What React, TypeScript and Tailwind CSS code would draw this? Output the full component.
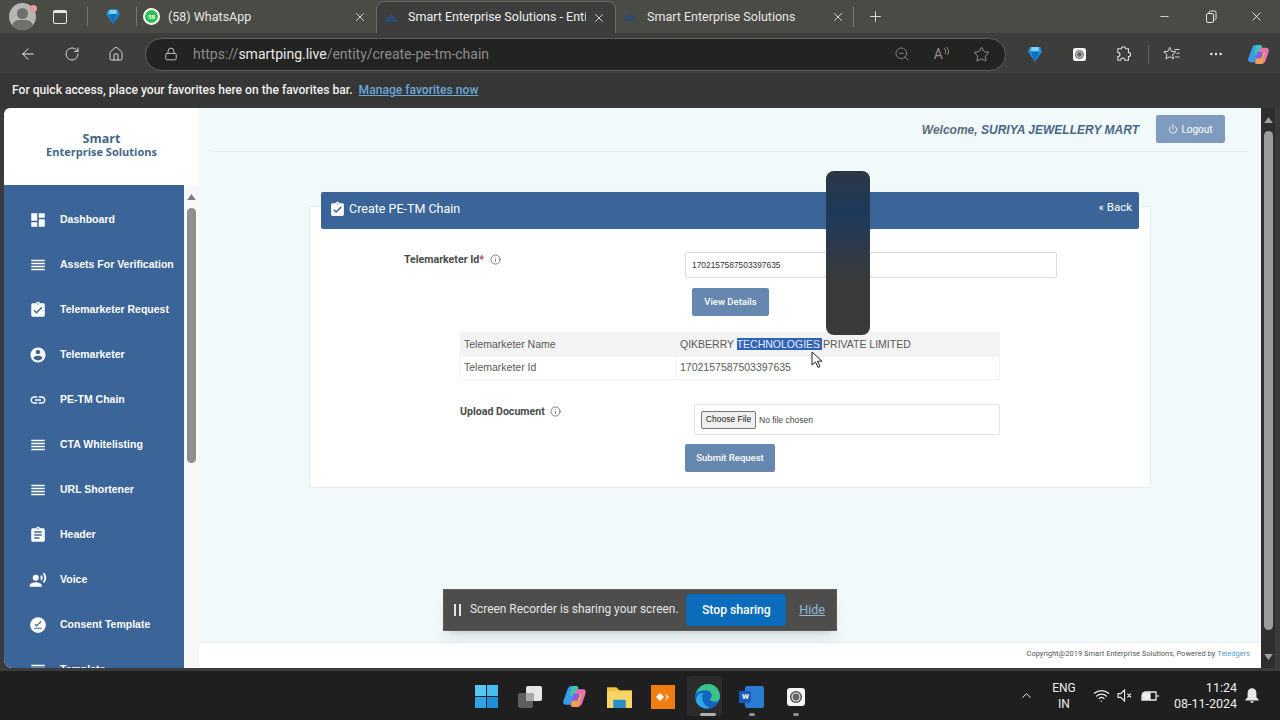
import React from 'react';
import {
  ArrowLeft, RotateCw, Home, Lock, ZoomOut, Star, X, Plus, Minus, ChevronUp, Wifi, Info, Power, MoreHorizontal,
} from 'lucide-react';

const P = {
  dashboard: 'M3 13h8V3H3v10zm0 8h8v-6H3v6zm10 0h8V11h-8v10zm0-18v6h8V3h-8z',
  lines: 'M3 15h18v-2H3v2zm0 4h18v-2H3v2zm0-8h18V9H3v2zm0-6v2h18V5H3z',
  turnedIn: 'M19 3h-4.18C14.4 1.84 13.3 1 12 1c-1.3 0-2.4.84-2.82 2H5c-1.1 0-2 .9-2 2v14c0 1.1.9 2 2 2h14c1.1 0 2-.9 2-2V5c0-1.1-.9-2-2-2zm-7 0c.55 0 1 .45 1 1s-.45 1-1 1-1-.45-1-1 .45-1 1-1zm-2 14l-4-4 1.41-1.41L10 14.17l6.59-6.59L18 9l-8 8z',
  account: 'M12 2C6.48 2 2 6.48 2 12s4.48 10 10 10 10-4.48 10-10S17.52 2 12 2zm0 3c1.66 0 3 1.34 3 3s-1.34 3-3 3-3-1.34-3-3 1.34-3 3-3zm0 14.2c-2.5 0-4.71-1.28-6-3.22.03-1.99 4-3.08 6-3.08 1.99 0 5.97 1.09 6 3.08-1.29 1.94-3.5 3.22-6 3.22z',
  link: 'M3.9 12c0-1.71 1.39-3.1 3.1-3.1h4V7H7c-2.76 0-5 2.24-5 5s2.24 5 5 5h4v-1.9H7c-1.71 0-3.1-1.39-3.1-3.1zM8 13h8v-2H8v2zm9-6h-4v1.9h4c1.71 0 3.1 1.39 3.1 3.1s-1.39 3.1-3.1 3.1h-4V17h4c2.76 0 5-2.24 5-5s-2.24-5-5-5z',
  assignment: 'M19 3h-4.18C14.4 1.84 13.3 1 12 1c-1.3 0-2.4.84-2.82 2H5c-1.1 0-2 .9-2 2v14c0 1.1.9 2 2 2h14c1.1 0 2-.9 2-2V5c0-1.1-.9-2-2-2zm-7 0c.55 0 1 .45 1 1s-.45 1-1 1-1-.45-1-1 .45-1 1-1zm2 14H7v-2h7v2zm3-4H7v-2h10v2zm0-4H7V7h10v2z',
  voice: 'M9 5a4 4 0 1 0 0 8 4 4 0 0 0 0-8zm0 10c-2.67 0-8 1.34-8 4v2h16v-2c0-2.66-5.33-4-8-4zm7.76-9.64l-1.68 1.69c.84 1.18.84 2.71 0 3.89l1.68 1.69c2.02-2.02 2.02-5.07 0-7.27zM20.07 2l-1.63 1.63c2.77 3.02 2.77 7.56 0 10.74L20.07 16c3.9-3.89 3.91-9.95 0-14z',
  consent: 'M12 1.5a10.5 10.5 0 1 0 0 21 10.5 10.5 0 0 0 0-21zM7 15.5h10v1.6H7v-1.6zm3.2-1.2L7.3 11.4l1.2-1.2 1.7 1.7 5.3-5.3 1.2 1.2-6.5 6.5z',
};

const menu = [
  { label: 'Dashboard', icon: P.dashboard },
  { label: 'Assets For Verification', icon: P.lines },
  { label: 'Telemarketer Request', icon: P.turnedIn },
  { label: 'Telemarketer', icon: P.account },
  { label: 'PE-TM Chain', icon: P.link },
  { label: 'CTA Whitelisting', icon: P.lines },
  { label: 'URL Shortener', icon: P.lines },
  { label: 'Header', icon: P.assignment },
  { label: 'Voice', icon: P.voice },
  { label: 'Consent Template', icon: P.consent },
  { label: 'Template', icon: P.lines },
];

const MatIcon = ({ d, className }: { d: string; className: string }) => (
  <svg viewBox="0 0 24 24" fill="currentColor" fillRule="evenodd" className={className}>
    <path d={d} />
  </svg>
);

const Diamond = ({ className }: { className: string }) => (
  <svg viewBox="0 0 16 18" className={className}>
    <path d="M2 1h12l2 5-8 12L0 6z" fill="#1c8fe0" />
    <path d="M4 1h8l1 5H3z" fill="#7fd4fa" />
    <path d="M3 6h10l-5 12z" fill="#0f6fc0" />
  </svg>
);

const Copilot = ({ className }: { className: string }) => (
  <svg viewBox="0 0 24 24" className={className}>
    <path d="M9 2h4c2 0 2.6 1.4 2 3l-4 12c-.6 2-1.6 3-4 3H4c-2.5 0-3.4-2-2.6-4L5 6c.8-2.500 2-4 4-4z" fill="#3a9be8" />
    <path d="M11 2h3c1.500 0 2 2 1.500 3.500L13 12l-6-.500L9 5c.4-1.500 1-3 2-3z" fill="#35c9b0" />
    <path d="M15 5h5c2.500 0 3.400 2 2.600 4l-3 9c-.8 2-2 4-4.600 4h-5c-1.600 0-2-1.400-1.500-3l4-11c.5-1.600 1-3 2.500-3z" fill="#e870b8" />
    <path d="M10 17l3-8h6l-3 13h-5c-1.600 0-2-1.400-1-5z" fill="#f3a24a" />
    <path d="M11 9h6l-2 7H9z" fill="#8a5ce0" />
  </svg>
);

const Recorder = ({ className }: { className: string }) => (
  <svg viewBox="0 0 18 18" className={className}>
    <rect width="18" height="18" rx="3" fill="#f4f4f4" />
    <circle cx="9" cy="9" r="6" fill="#555" />
    <circle cx="9" cy="9" r="4.500" fill="#e8e8e8" />
    <circle cx="9" cy="9" r="3.400" fill="#666" />
  </svg>
);

const EdgeLogo = ({ className }: { className: string }) => (
  <svg viewBox="0 0 24 24" className={className}>
    <circle cx="12" cy="12" r="12" fill="#1565c0" />
    <path d="M1 9C3 3 8 0 12.500 0 19 0 24 5 24 12c0 3-2 5-5 5-2.500 0-4.500-1-4.500-2.500 0-1 1.500-1.500 1.500-3.500 0-3-2.500-5-6-5S3 7 1 9z" fill="#3bc48a" />
    <path d="M7 14c0 4 3 7.500 7 8.500-4 2-11 0-13-6 0-5 3-8 7-8-1 1.500-1 3.500-1 5.500z" fill="#2fa8e8" />
  </svg>
);

const TabIcon = () => (
  <svg viewBox="0 0 16 10" className="w-[16px] h-[10px] shrink-0">
    <path d="M0 9l8-8 8 8z" fill="#2e4a6e" />
  </svg>
);

const ToolSlot = ({ children }: { children: React.ReactNode }) => (
  <div className="w-[44px] flex justify-center items-center shrink-0">{children}</div>
);

const TaskSlot = ({ children, mark }: { children: React.ReactNode; mark?: 'big' | 'small' }) => (
  <div className="relative w-[44.300px] h-full flex justify-center items-center shrink-0 pt-[2px]">
    {mark === 'big' && <div className="absolute left-[2px] top-[5px] w-[35px] h-[40px] rounded-[4px] bg-[#2c2c2c]" />}
    <div className="relative">{children}</div>
    {mark && (
      <div className={`absolute bottom-[4px] left-1/2 -translate-x-1/2 h-[3px] rounded-full ${mark === 'big' ? 'w-[16px] bg-[#b0b0b0]' : 'w-[6px] bg-[#8e8e8e]'}`} />
    )}
  </div>
);

const Tri = ({ down, className }: { down?: boolean; className: string }) => (
  <svg viewBox="0 0 10 7" fill="currentColor" className={className}>
    <path d={down ? 'M0 0h10L5 7z' : 'M5 0l5 7H0z'} />
  </svg>
);

export default function App() {
  return (
    <div className="relative w-[1280px] h-[720px] overflow-hidden flex flex-col bg-[#3a3a3a] font-['Roboto',sans-serif]">
      {/* tab strip */}
      <div className="h-[33px] flex items-stretch bg-[#4b4b46] shrink-0 text-[#e6e6e6]">
        <div className="relative ml-[9px] mt-[3px] w-[27px] h-[27px] rounded-full bg-[#b5b5b2] overflow-hidden shrink-0">
          <div className="absolute left-[8px] top-[5px] w-[11px] h-[11px] rounded-full bg-[#6f6f6c]" />
          <div className="absolute left-[3px] top-[17px] w-[21px] h-[14px] rounded-full bg-[#6f6f6c]" />
        </div>
        <div className="ml-[-6px] mt-[5px] w-[7px] h-[7px] rounded-full bg-[#e39a9a] shrink-0 z-10" />
        <div className="ml-[16px] mt-[10px] w-[14px] h-[14px] rounded-[2px] border border-[#e6e6e6] border-t-[3px] shrink-0" />
        <div className="ml-[20px] mt-[7px] w-[1px] h-[19px] bg-[#77776f] shrink-0" />
        <Diamond className="ml-[18px] mt-[9px] w-[14px] h-[15px] shrink-0" />
        <div className="ml-[16px] mt-[7px] w-[1px] h-[19px] bg-[#77776f] shrink-0" />
        <div className="ml-[6px] mt-[8px] w-[17px] h-[17px] rounded-full bg-[#2fc04f] border-2 border-white flex items-center justify-center text-[6px] font-bold text-white shrink-0">
          58
        </div>
        <span className="ml-[8px] mt-[8px] w-[183px] text-[12.500px] shrink-0">(58) WhatsApp</span>
        <X className="ml-[2px] mt-[10px] w-[14px] h-[14px] shrink-0" strokeWidth={1.5} />

        <div className="ml-[9px] mt-[1px] w-[240px] flex items-center bg-[#3d3d3b] rounded-t-[8px] border border-b-0 border-[#6a6a66] pl-[6px] shrink-0">
          <TabIcon />
          <span className="ml-[9px] w-[178px] overflow-hidden whitespace-nowrap text-[12.500px] text-[#f0f0f0]">
            Smart Enterprise Solutions - Entity
          </span>
          <X className="ml-[6px] w-[14px] h-[14px] shrink-0" strokeWidth={1.5} />
        </div>
        <div className="w-[229px] flex items-center pl-[6px] pt-[1px] shrink-0">
          <TabIcon />
          <span className="ml-[9px] w-[184px] whitespace-nowrap text-[12.500px]">Smart Enterprise Solutions</span>
          <X className="w-[14px] h-[14px] shrink-0" strokeWidth={1.5} />
        </div>

        <div className="ml-[8px] mt-[7px] w-[1px] h-[20px] bg-[#77776f] shrink-0" />
        <Plus className="ml-[13px] mt-[8px] w-[17px] h-[17px] shrink-0" strokeWidth={1.3} />
        <Minus className="ml-[274px] mt-[10px] w-[13px] h-[13px] shrink-0" strokeWidth={1.5} />
        <svg viewBox="0 0 12 13" fill="none" stroke="#e6e6e6" className="ml-[34px] mt-[10px] w-[12px] h-[13px] shrink-0">
          <rect x="1.500" y="3.500" width="7" height="9" rx="1.500" />
          <path d="M4 3V2.500A1.500 1.500 0 0 1 5.500 1h4A1.500 1.500 0 0 1 11 2.500v6A1.500 1.500 0 0 1 9.500 10" />
        </svg>
        <X className="ml-[32px] mt-[9px] w-[15px] h-[15px] shrink-0" strokeWidth={1.5} />
      </div>

      {/* toolbar */}
      <div className="h-[40px] flex items-center pl-[6px] pt-[2px] bg-[#3d3d3b] shrink-0 text-[#ececec]">
        <ToolSlot><ArrowLeft className="w-[18px] h-[18px]" strokeWidth={1.3} /></ToolSlot>
        <ToolSlot><RotateCw className="w-[16px] h-[16px]" strokeWidth={1.3} /></ToolSlot>
        <ToolSlot><Home className="w-[16px] h-[16px]" strokeWidth={1.3} /></ToolSlot>
        <div className="ml-[7px] w-[861px] h-[33px] flex items-center rounded-full bg-[#232322] border border-[#5f5f5c] pl-[18px] shrink-0">
          <Lock className="w-[14px] h-[14px] text-[#d8d8d8]" strokeWidth={1.4} />
          <span className="ml-[15px] text-[14px] text-[#8c8c8a] whitespace-nowrap">
            https://<span className="text-[#e8e8e8]">smartping.live</span>/entity/create-pe-tm-chain
          </span>
          <div className="ml-auto flex items-center text-[#8f8f8d]">
            <ZoomOut className="w-[16px] h-[16px] mr-[24px]" strokeWidth={1.3} />
            <span className="text-[14px] leading-none">A</span>
            <svg viewBox="0 0 6 10" fill="none" stroke="#8f8f8d" className="w-[6px] h-[10px] mb-[5px] mr-[24px]">
              <path d="M1 1c2 2 2 4 1 6M3.500 0c2.500 3 2.500 5 1 8" />
            </svg>
            <Star className="w-[17px] h-[17px] mr-[15px] text-[#a5a5a2]" strokeWidth={1.2} />
          </div>
        </div>
        <div className="ml-[7px] flex items-center">
          <ToolSlot><Diamond className="w-[14px] h-[16px]" /></ToolSlot>
          <ToolSlot><Recorder className="w-[13px] h-[13px]" /></ToolSlot>
          <ToolSlot>
            <svg viewBox="0 0 24 24" fill="none" stroke="#dcdcdc" strokeWidth="1.500" className="w-[17px] h-[17px]">
              <path d="M9 4a3 3 0 0 1 6 0h4v5a3 3 0 0 1 0 6v5h-5a3 3 0 0 0-6 0H4v-5a3 3 0 0 0 0-6V4z" />
            </svg>
          </ToolSlot>
          <div className="ml-[3px] w-[1px] h-[19px] bg-[#5f5f5c]" />
          <div className="w-[1px]" />
          <ToolSlot>
            <svg viewBox="0 0 24 24" fill="none" stroke="#dcdcdc" strokeWidth="1.300" className="w-[18px] h-[18px]">
              <path d="M9 3l2.400 5.500 5.600.5-4.200 3.800 1.300 5.700L9 15.600 3.900 18.500l1.300-5.700L1 9l5.600-.5zM15 6h7M18 11h4M16 16h6" />
            </svg>
          </ToolSlot>
          <ToolSlot><MoreHorizontal className="w-[16px] h-[16px]" strokeWidth={1.6} /></ToolSlot>
          <Copilot className="ml-[9px] w-[23px] h-[23px]" />
        </div>
      </div>

      {/* favorites bar */}
      <div className="h-[35px] flex items-center pl-[12px] bg-[#363636] shrink-0 text-[12.100px] font-medium">
        <span className="text-[#f0f0f0]">For quick access, place your favorites here on the favorites bar.</span>
        <span className="ml-[6px] text-[#6aa7d8] underline">Manage favorites now</span>
      </div>

      {/* page */}
      <div className="flex-1 min-h-0 flex pl-[4px] pr-[5px] font-['Liberation_Sans',sans-serif]">
        {/* sidebar */}
        <div className="w-[195px] flex flex-col bg-white rounded-tl-[6px] rounded-bl-[8px] overflow-hidden shrink-0">
          <div className="h-[77px] flex flex-col items-center justify-center pb-[3px] font-['Open_Sans',sans-serif] font-bold text-[11px] leading-[13px] text-[#45668a]">
            <span className="text-[12.500px]">Smart</span>
            <span>Enterprise Solutions</span>
          </div>
          <div className="flex-1 min-h-0 flex">
            <div className="w-[180px] bg-[#3b6498] overflow-hidden pt-[12px] shrink-0">
              {menu.map(item => (
                <div key={item.label} className="h-[45px] flex items-center pl-[25px] text-white">
                  <MatIcon d={item.icon} className="w-[18px] h-[18px] shrink-0" />
                  <span className="ml-[13px] text-[10.500px] font-bold whitespace-nowrap">{item.label}</span>
                </div>
              ))}
            </div>
            <div className="flex-1 flex flex-col items-center bg-[#f8f8f8] pt-[9px]">
              <Tri className="w-[9px] h-[6px] text-[#7d7d7d]" />
              <div className="mt-[8px] w-[9px] h-[255px] rounded-full bg-[#8f8f8f]" />
            </div>
          </div>
        </div>

        {/* main */}
        <div className="w-[1062px] flex flex-col bg-[#f2f9fa] shrink-0">
          <div className="flex justify-end items-start pt-[7px] pr-[36px] h-[43px] shrink-0">
            <span className="mt-[6px] mr-[17px] text-[12px] font-bold italic text-[#5b6b7c]">
              Welcome, <span className="text-[#4a6688]">SURIYA JEWELLERY MART</span>
            </span>
            <button className="w-[69px] h-[28px] flex items-center justify-center rounded-[2px] bg-[#7f9cc0] text-white text-[10px] font-['Roboto',sans-serif]">
              <Power className="w-[10px] h-[10px] mr-[3px]" strokeWidth={2} />
              Logout
            </button>
          </div>
          <div className="mx-[13px] h-[1px] bg-[#e6eef0] shrink-0" />

          <div className="flex-1 min-h-0 pt-[54px]">
            <div className="ml-[110px] w-[842px] bg-white border border-[#e3edf3] rounded-[2px] pb-[15px]">
              <div className="-mt-[15px] mx-[11px] h-[37px] flex items-center justify-between pl-[8px] pr-[7px] rounded-[2px] bg-[#3b6498] text-white font-['Roboto',sans-serif]">
                <div className="flex items-center -mt-[2px]">
                  <MatIcon d={P.turnedIn} className="w-[17px] h-[17px]" />
                  <span className="ml-[3px] text-[12.500px]">Create PE-TM Chain</span>
                </div>
                <span className="text-[11.500px] -mt-[6px]">« Back</span>
              </div>

              <div className="mt-[23px] flex items-start">
                <div className="ml-[94px] w-[281px] flex items-center text-[10.600px] font-bold text-[#4a4a4a] font-['Roboto',sans-serif]">
                  Telemarketer Id<span className="text-[#b23a4a]">*</span>
                  <Info className="ml-[6px] w-[11px] h-[11px]" strokeWidth={1.5} />
                </div>
                <input
                  readOnly
                  value="1702157587503397635"
                  className="w-[372px] h-[26px] border border-[#dcdcdc] rounded-[2px] bg-white pl-[6px] text-[8.400px] text-[#333] outline-none"
                />
              </div>

              <button className="block ml-[382px] mt-[10px] w-[77px] h-[28px] rounded-[2px] bg-[#6587b0] text-white text-[9.500px] font-medium font-['Roboto',sans-serif]">
                View Details
              </button>

              <div className="ml-[150px] mt-[16px] w-[540px] border border-[#f3f3f3] text-[10.500px] text-[#5a5a5a]">
                <div className="h-[24px] flex items-center bg-[#f3f3f3]">
                  <div className="w-[216px] pl-[3px]">Telemarketer Name</div>
                  <div className="pl-[3px] whitespace-nowrap">
                    QIKBERRY{' '}
                    <span className="bg-[#2f62b8] text-[#e8eefa] pr-[2px]">TECHNOLOGIES</span>
                    <span className="ml-[1px]">PRIVATE LIMITED</span>
                  </div>
                </div>
                <div className="h-[22px] flex items-center">
                  <div className="w-[216px] pl-[3px] h-full flex items-center border-r border-[#f3f3f3]">Telemarketer Id</div>
                  <div className="pl-[3px]">1702157587503397635</div>
                </div>
              </div>

              <div className="mt-[24px] flex items-start">
                <div className="ml-[150px] w-[234px] flex items-center text-[10.600px] font-bold text-[#4a4a4a] font-['Roboto',sans-serif]">
                  Upload Document
                  <Info className="ml-[5px] w-[11px] h-[11px]" strokeWidth={1.5} />
                </div>
                <div className="w-[306px] h-[31px] flex items-center border border-[#e4e4e4] rounded-[2px] pl-[6px]">
                  <input
                    type="file"
                    className="w-[200px] text-[8.500px] text-[#444] file:h-[18px] file:w-[55px] file:mr-[3px] file:bg-[#efefef] file:border file:border-[#767676] file:rounded-[2px] file:text-[#222]"
                  />
                </div>
              </div>

              <button className="block ml-[375px] mt-[9px] w-[90px] h-[28px] rounded-[2px] bg-[#6587b0] text-white text-[9.500px] font-medium font-['Roboto',sans-serif]">
                Submit Request
              </button>
            </div>
          </div>

          <div className="h-[26px] flex items-center justify-end pr-[11px] pb-[3px] bg-white border-t border-[#e8f0f2] shrink-0 font-['Roboto',sans-serif] text-[7.500px] text-[#555]">
            Copyright@2019 Smart Enterprise Solutions, Powered by <span className="ml-[2px] text-[#4f9ccf]">Teledgers</span>
          </div>
        </div>

        {/* page scrollbar */}
        <div className="w-[14px] flex flex-col items-center bg-[#2e2e2e] pt-[9px] pb-[8px] shrink-0 text-[#a0a0a0]">
          <Tri className="w-[9px] h-[6px]" />
          <div className="mt-[8px] w-[9px] flex-1 mb-[24px] rounded-full bg-[#9c9c9c]" />
          <Tri down className="w-[9px] h-[6px]" />
        </div>
      </div>

      {/* taskbar */}
      <div className="h-[52px] flex items-center bg-[#1f1f1f] border-t-[3px] border-[#3b3b3b] shrink-0 text-[#ececec]">
        <div className="ml-[464px] flex items-center h-full">
          <TaskSlot>
            <div className="grid grid-cols-2 gap-[1px] w-[23px] h-[23px]">
              <div className="bg-[#58c7f3]" />
              <div className="bg-[#45bdf0]" />
              <div className="bg-[#2ea6e6]" />
              <div className="bg-[#1e8fdb]" />
            </div>
          </TaskSlot>
          <TaskSlot>
            <div className="relative w-[24px] h-[22px]">
              <div className="absolute left-0 bottom-0 w-[15px] h-[15px] rounded-[2px] bg-[#5f5f5f]" />
              <div className="absolute right-0 top-0 w-[16px] h-[15px] rounded-[2px] bg-[#e6e6e6]" />
              <div className="absolute left-[8px] top-[7px] w-[8px] h-[8px] bg-[#a8a8a8]" />
            </div>
          </TaskSlot>
          <TaskSlot><Copilot className="w-[25px] h-[25px]" /></TaskSlot>
          <TaskSlot>
            <svg viewBox="0 0 24 22" className="w-[25px] h-[23px]">
              <path d="M0 2h9l3 3h12v17H0z" fill="#f0c33c" />
              <path d="M0 6h24v16H0z" fill="#f7d568" />
              <path d="M7 14h10a1 1 0 0 1 1 1v7H6v-7a1 1 0 0 1 1-1z" fill="#2a8fc9" />
            </svg>
          </TaskSlot>
          <TaskSlot>
            <svg viewBox="0 0 24 24" className="w-[24px] h-[24px]">
              <rect width="24" height="24" fill="#f07f13" />
              <path d="M9 8l4 4-4 4-4-4z" fill="#fff" />
              <path d="M14 8l4 4-4 4 1.500-4z" fill="#fde0b8" />
            </svg>
          </TaskSlot>
          <TaskSlot mark="big"><EdgeLogo className="w-[25px] h-[25px]" /></TaskSlot>
          <TaskSlot mark="small">
            <div className="relative w-[25px] h-[22px]">
              <div className="absolute right-0 top-0 w-[19px] h-[22px] rounded-[2px] bg-[#2b7cd3]" />
              <div className="absolute left-0 top-[5px] w-[12px] h-[12px] rounded-[1px] bg-[#185abd] flex items-center justify-center text-[8px] font-bold text-white">
                W
              </div>
            </div>
          </TaskSlot>
          <TaskSlot mark="small"><Recorder className="w-[18px] h-[18px]" /></TaskSlot>
        </div>

        <div className="ml-auto flex items-center h-full">
          <ChevronUp className="w-[15px] h-[15px]" strokeWidth={1.6} />
          <div className="ml-[12px] w-[36px] flex flex-col items-center text-[12px] leading-[16px]">
            <span>ENG</span>
            <span>IN</span>
          </div>
          <Wifi className="ml-[11px] w-[17px] h-[17px]" strokeWidth={1.8} />
          <svg viewBox="0 0 18 14" fill="none" stroke="#ececec" strokeWidth="1.200" className="ml-[7px] w-[17px] h-[13px]">
            <path d="M1 5h3l4-4v12l-4-4H1zM11 5l4 4M15 5l-4 4" />
          </svg>
          <svg viewBox="0 0 18 14" className="ml-[7px] w-[18px] h-[14px]" fill="none" stroke="#ececec" strokeWidth="1.300">
            <path d="M4 3h11v8H1V6z" />
            <path d="M2 4h7v6H2z" fill="#ececec" />
            <path d="M17 6v2" />
          </svg>
          <div className="ml-[8px] w-[70px] flex flex-col items-end whitespace-nowrap text-[12.500px] leading-[16px]">
            <span>11:24</span>
            <span>08-11-2024</span>
          </div>
          <svg viewBox="0 0 16 18" fill="#e6e6e6" className="ml-[8px] mr-[21px] w-[14px] h-[16px]">
            <path d="M8 0a5 5 0 0 1 5 5v5l3 4H0l3-4V5a5 5 0 0 1 5-5zM6 15h4a2 2 0 0 1-4 0z" />
          </svg>
        </div>
      </div>

      {/* floating pill over the page */}
      <div className="absolute left-[826px] top-[171px] w-[44px] h-[164px] rounded-[8px] bg-gradient-to-b from-[#2b3744] via-[#1d3a5c] via-25% to-[#3a3a38] to-70%" />

      {/* mouse pointer */}
      <svg viewBox="0 0 12 18" className="absolute left-[811px] top-[351px] w-[12px] h-[18px]">
        <path d="M1 1v13l3.500-3 2.500 5.500 2-1-2.500-5.300H11z" fill="#fff" stroke="#222" strokeWidth="1" />
      </svg>

      {/* screen sharing notice */}
      <div className="absolute left-[443px] top-[589px] w-[394px] h-[42px] flex items-center bg-[#4d4e4c] border border-[#5a5a58] shadow-lg pl-[10px] text-[#e4e4e4]">
        <div className="w-[2px] h-[12px] bg-[#e4e4e4]" />
        <div className="ml-[3px] w-[2px] h-[12px] bg-[#e4e4e4]" />
        <span className="ml-[9px] whitespace-nowrap text-[11.900px]">Screen Recorder is sharing your screen.</span>
        <button className="ml-auto w-[100px] h-[32px] rounded-[4px] bg-[#0b6cbc] text-white text-[12.200px] font-medium shrink-0">
          Stop sharing
        </button>
        <span className="ml-[13px] mr-[11px] text-[12.500px] text-[#8fb8dc] underline">Hide</span>
      </div>
    </div>
  );
}
